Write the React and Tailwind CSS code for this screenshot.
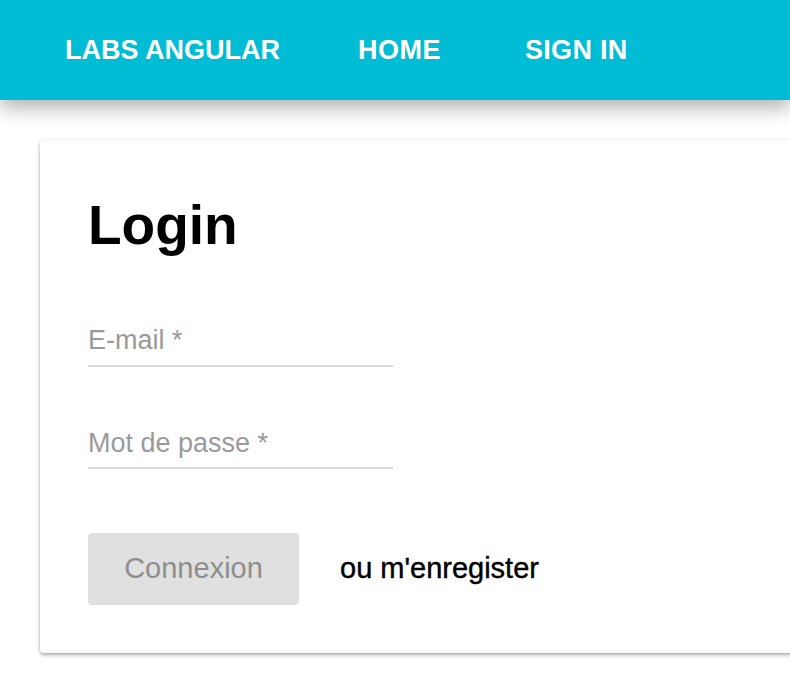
import React from 'react';

export default function App() {
    return (
        <div className="min-h-[676px] w-[790px] overflow-hidden bg-white font-['Liberation_Sans',Arial,sans-serif]">
            {/* Toolbar */}
            <nav className="relative z-10 flex h-[100px] items-center bg-[#00bcd4] pl-[65px] text-[27px] font-bold text-white shadow-[0_8px_18px_rgba(0,0,0,0.3)]">
                <span>LABS ANGULAR</span>
                <span className="ml-[78px] tracking-[0.5px]">HOME</span>
                <span className="ml-[84px] tracking-[0.3px]">SIGN IN</span>
            </nav>

            {/* Login card */}
            <div className="ml-[40px] mt-[40px] w-[800px] rounded-[4px] bg-white px-[48px] pb-[48px] pt-[58px] shadow-[0_2px_4px_rgba(0,0,0,0.3),0_1px_2px_rgba(0,0,0,0.1)]">
                <h1 className="text-[55px] font-bold leading-none text-black">Login</h1>

                <div className="mt-[71px] w-[305px] border-b-2 border-[#dcdcdc] pb-[9px]">
                    <div className="text-[27px] leading-[32px] text-[#9a9a9a]">E-mail *</div>
                </div>

                <div className="mt-[60px] w-[305px] border-b-2 border-[#dcdcdc] pb-[8px]">
                    <div className="text-[27px] leading-[32px] text-[#9a9a9a]">Mot de passe *</div>
                </div>

                <div className="mt-[64px] flex items-center gap-[41px]">
                    <button className="flex h-[72px] w-[211px] items-center justify-center rounded-[4px] bg-[#e0e0e0] text-[29px] text-[#8e8e8e]">
                        Connexion
                    </button>
                    <span className="text-[29px] text-black [-webkit-text-stroke:0.4px_black]">ou m'enregister</span>
                </div>
            </div>
        </div>
    );
}
